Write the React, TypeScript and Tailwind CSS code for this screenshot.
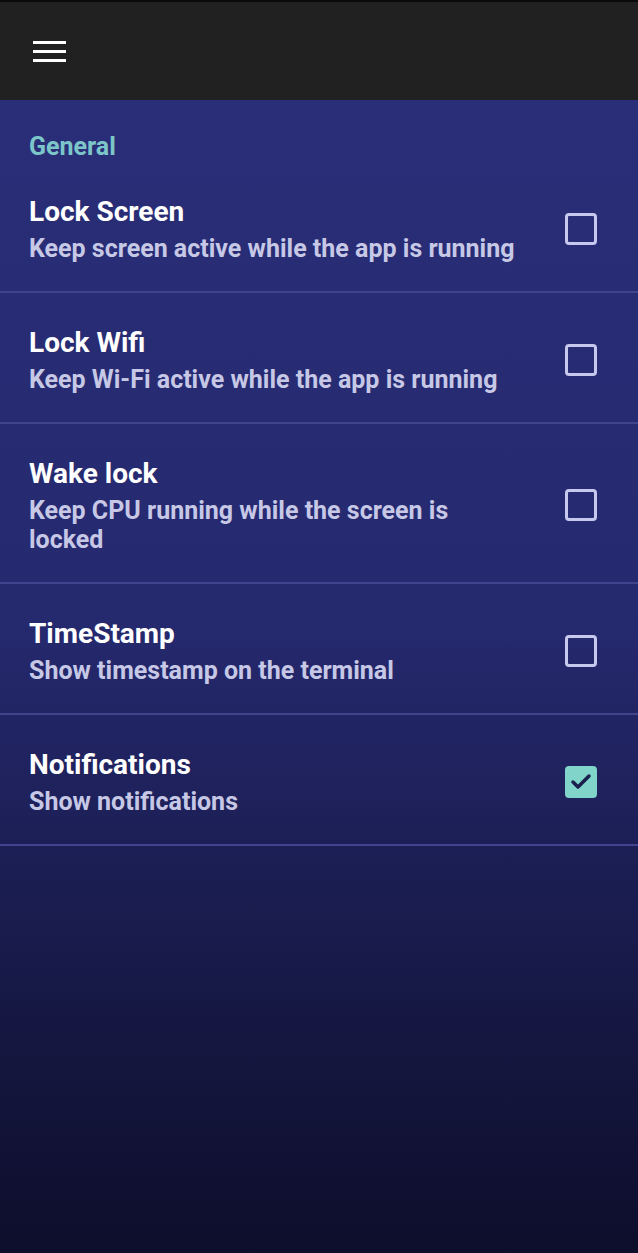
import { Check } from "lucide-react";

const settings = [
  { title: "Lock Screen", desc: "Keep screen active while the app is running", checked: false },
  { title: "Lock Wifi", desc: "Keep Wi-Fi active while the app is running", checked: false },
  { title: "Wake lock", desc: "Keep CPU running while the screen is locked", checked: false },
  { title: "TimeStamp", desc: "Show timestamp on the terminal", checked: false },
  { title: "Notifications", desc: "Show notifications", checked: true },
];

const CheckBox = ({ checked }: { checked: boolean }) =>
  checked ? (
    <div className="w-[32px] h-[32px] rounded-[4px] bg-[#80d4c9] flex items-center justify-center shrink-0">
      <Check className="w-[24px] h-[24px] text-[#1b1f4d]" strokeWidth={3.5} />
    </div>
  ) : (
    <div className="w-[32px] h-[32px] rounded-[4px] border-[3px] border-[#c6c8ee] shrink-0" />
  );

const App = () => {
  return (
    <div
      className="flex flex-col min-h-[1253px] bg-gradient-to-b from-[#2b2f7a] via-[#25296e] to-[#0d0e2b]"
      style={{ fontFamily: "Roboto, 'Noto Sans', sans-serif" }}
    >
      {/* Toolbar */}
      <header className="h-[100px] bg-[#212121] border-t-2 border-[#0a0a0a] flex items-center pl-[33px]">
        <div className="flex flex-col gap-[6px] w-[33px]">
          <span className="h-[3px] bg-white" />
          <span className="h-[3px] bg-white" />
          <span className="h-[3px] bg-white" />
        </div>
      </header>

      <main className="flex-1">
        <h2 className="pt-[32px] px-[29px] text-[25px] leading-[29px] font-bold text-[#7cc6ca]">General</h2>

        {settings.map((s, i) => (
          <div
            key={s.title}
            className={`flex items-center justify-between pl-[29px] pr-[41px] pb-[28px] border-b-2 border-[#40448c] ${i === 0 ? "pt-[33px]" : "pt-[32px]"}`}
          >
            <div className="max-w-[490px]">
              <p className="text-[28px] leading-[36px] font-bold text-white">{s.title}</p>
              <p className="mt-1 text-[25px] leading-[29px] font-bold text-[#c6c8e6]">{s.desc}</p>
            </div>
            <CheckBox checked={s.checked} />
          </div>
        ))}
      </main>
    </div>
  );
};

export default App;
